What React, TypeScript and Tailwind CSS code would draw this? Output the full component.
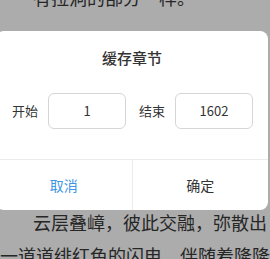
import React from "react";

export default function App() {
  const font = { fontFamily: '"Noto Sans CJK SC", "Noto Sans", sans-serif' };
  return (
    <div className="relative w-[270px] h-[259px] overflow-hidden bg-[#acacac]" style={font}>
      <div className="-mt-[19px] text-[18px] leading-[33px] text-[#262626] whitespace-nowrap">
        <div className="h-[33px] pl-[33px]">有拉洞的部分一样。</div>
        <div className="h-[192px]" />
        <div className="h-[33px] pl-[33px]">云层叠嶂，彼此交融，弥散出</div>
        <div className="h-[33px]">一道道绯红色的闪电，伴随着隆隆</div>
      </div>

      <div className="absolute left-[-4px] top-[31px] w-[272px] h-[179px] bg-white rounded-[8px] flex flex-col">
        <div className="pt-[17px] h-[37px] text-center text-[15px] leading-[20px] font-medium text-[#333]">
          缓存章节
        </div>
        <div className="mt-[25px] h-[36px] pl-[16px] flex items-center text-[13px] text-[#333]">
          <span className="w-[26px]">开始</span>
          <div className="ml-[10px] w-[78px] h-[36px] border border-[#d6d6d6] rounded-[6px] flex items-center justify-center">
            1
          </div>
          <span className="ml-[13px] w-[26px]">结束</span>
          <div className="ml-[10px] w-[78px] h-[36px] border border-[#d6d6d6] rounded-[6px] flex items-center justify-center">
            1602
          </div>
        </div>
        <div className="mt-[30px] border-t border-[#ececec] flex flex-1 text-[14px]">
          <div className="flex-1 flex items-center justify-center text-[#3d96e3] border-r border-[#ececec]">取消</div>
          <div className="flex-1 flex items-center justify-center text-[#333]">确定</div>
        </div>
      </div>
    </div>
  );
}
